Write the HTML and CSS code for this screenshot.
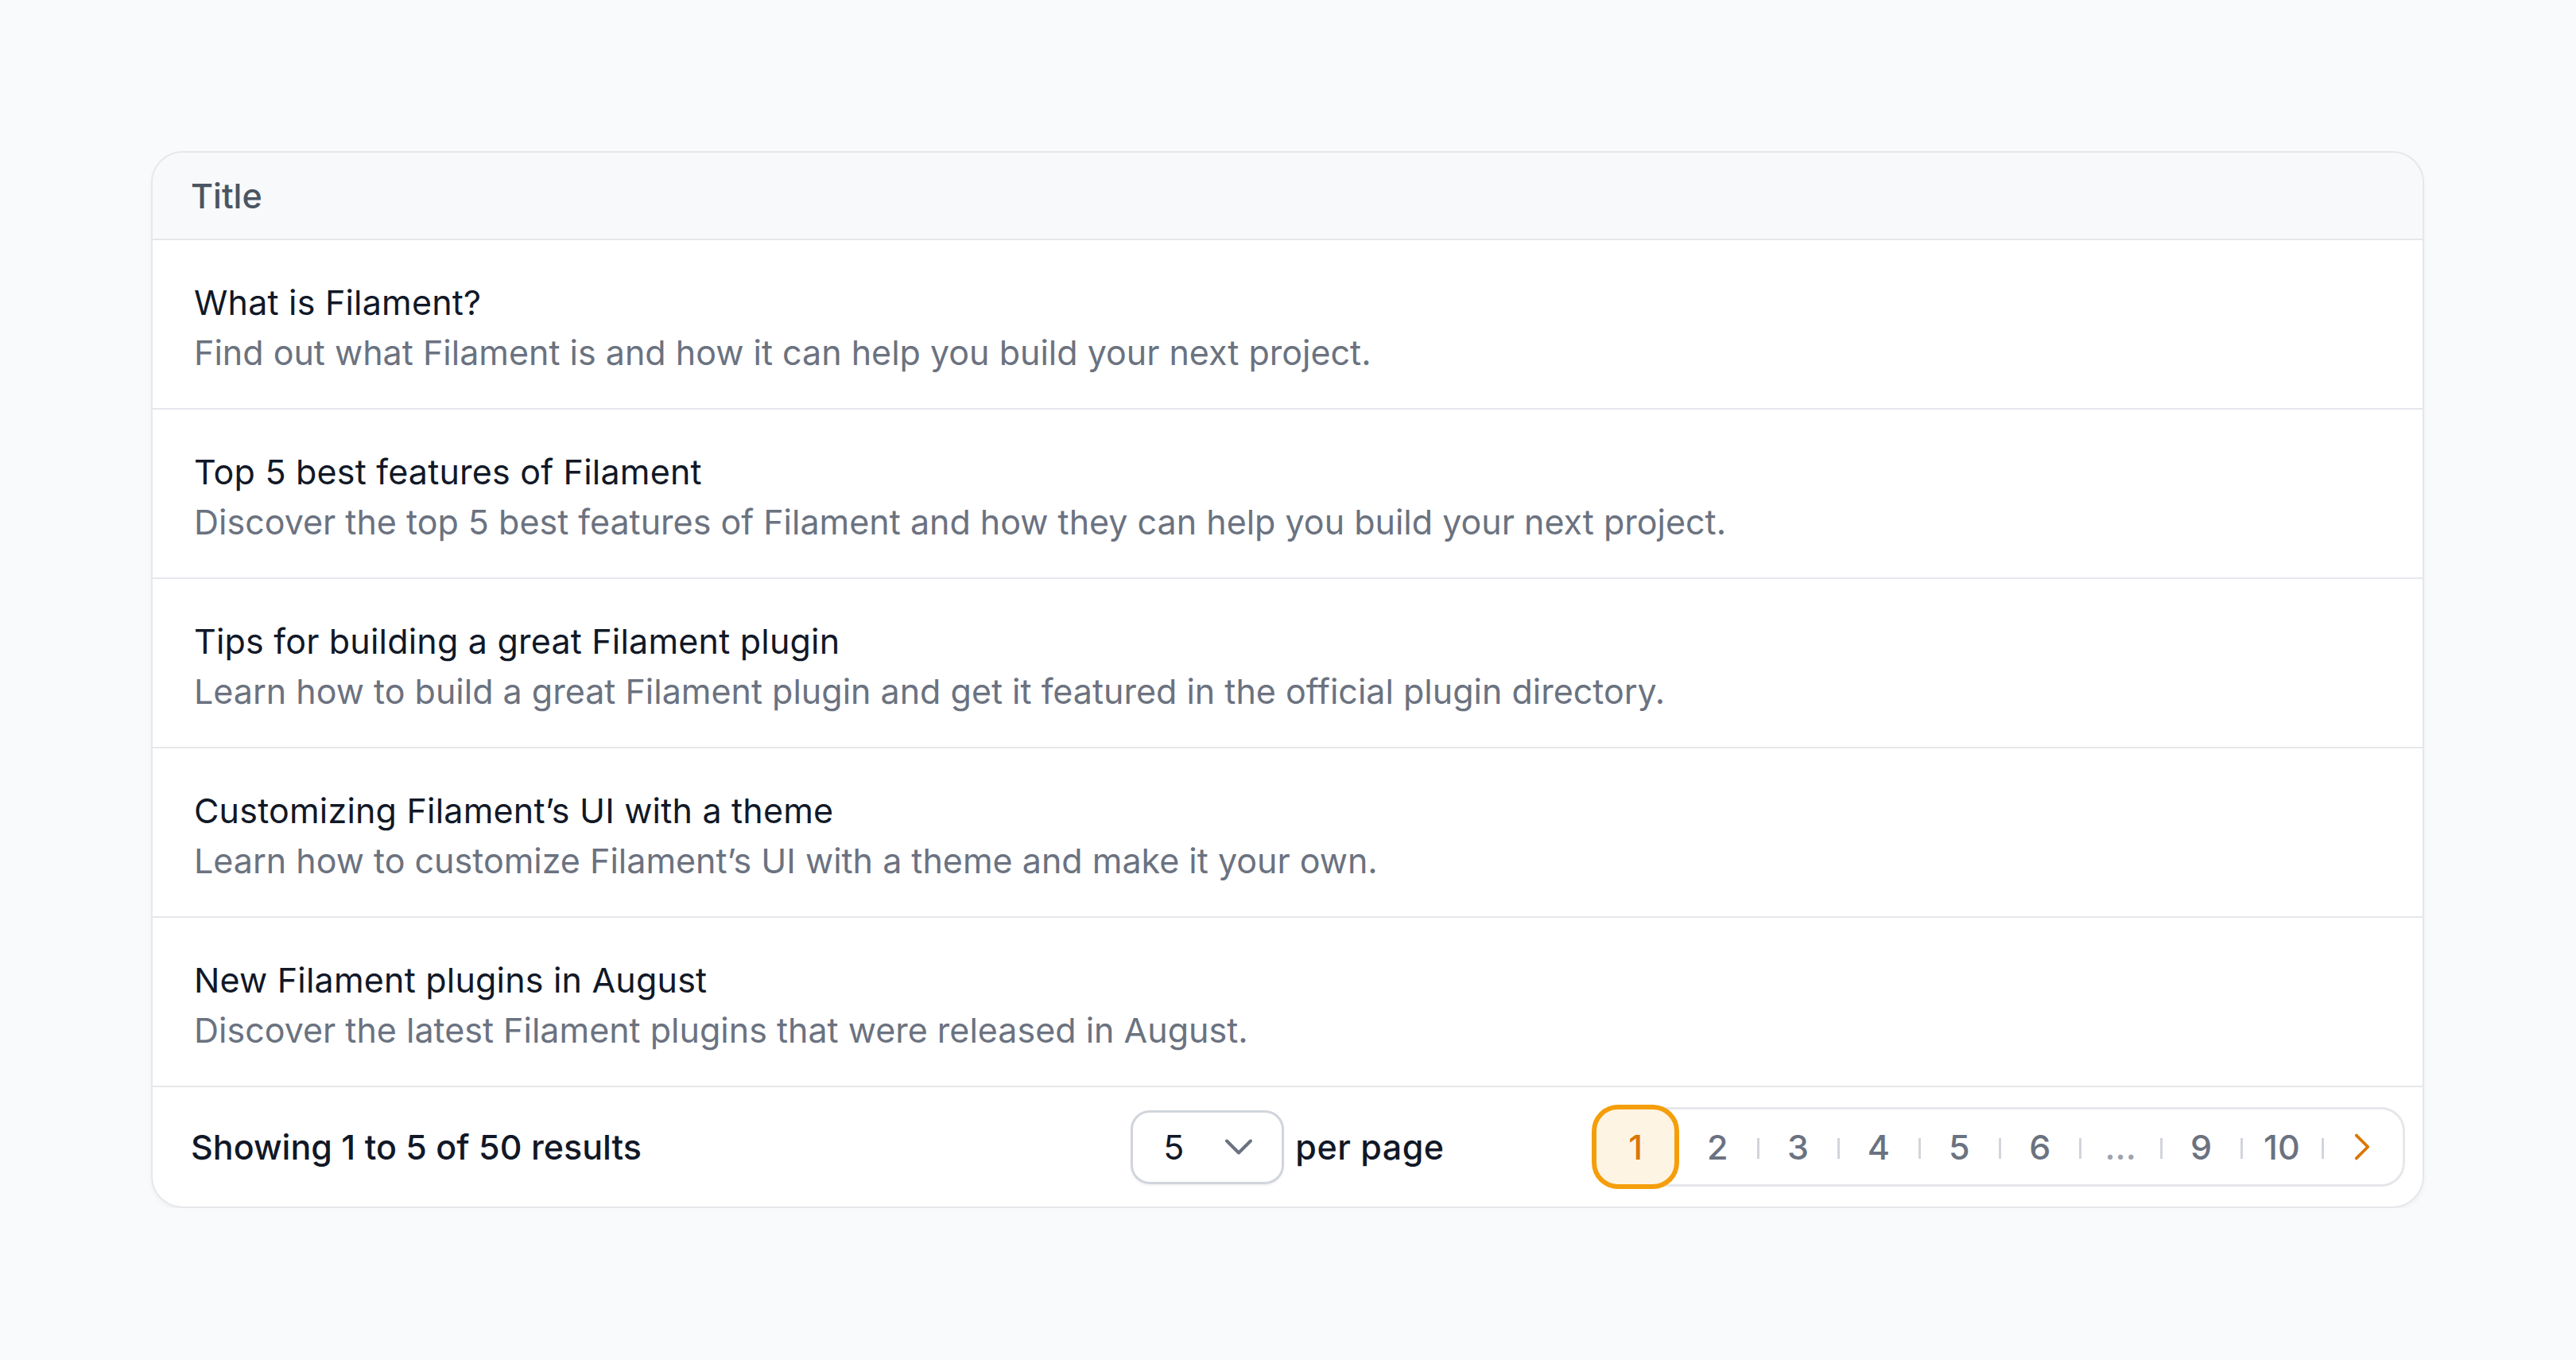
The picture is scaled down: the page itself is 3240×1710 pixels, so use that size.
FILE: index.html
```html
<!DOCTYPE html>
<html lang="en">
<head>
<meta charset="utf-8">
<title>Posts table</title>
<link rel="stylesheet" href="styles.css">
</head>
<body>
<main class="page">
  <section class="card">
    <div class="thead">Title</div>
    <div class="row">
      <div class="row-title">What is Filament?</div>
      <div class="row-desc">Find out what Filament is and how it can help you build your next project.</div>
    </div>
    <div class="row">
      <div class="row-title">Top 5 best features of Filament</div>
      <div class="row-desc">Discover the top 5 best features of Filament and how they can help you build your next project.</div>
    </div>
    <div class="row">
      <div class="row-title">Tips for building a great Filament plugin</div>
      <div class="row-desc">Learn how to build a great Filament plugin and get it featured in the official plugin directory.</div>
    </div>
    <div class="row">
      <div class="row-title">Customizing Filament’s UI with a theme</div>
      <div class="row-desc">Learn how to customize Filament’s UI with a theme and make it your own.</div>
    </div>
    <div class="row">
      <div class="row-title">New Filament plugins in August</div>
      <div class="row-desc">Discover the latest Filament plugins that were released in August.</div>
    </div>
    <footer class="tfoot">
      <div class="overview">Showing 1 to 5 of 50 results</div>
      <div class="per-page">
        <div class="select">
          <span class="select-value">5</span>
          <svg class="select-chevron" viewBox="0 0 24 24" fill="none" stroke="currentColor" stroke-width="2" stroke-linecap="round" stroke-linejoin="round"><path d="M19.5 8.25l-7.5 7.5-7.5-7.5"/></svg>
        </div>
        <span class="per-page-label">per page</span>
      </div>
      <nav class="pager">
        <span class="item active">1</span>
        <span class="item sep">2</span>
        <span class="item sep">3</span>
        <span class="item sep">4</span>
        <span class="item sep">5</span>
        <span class="item sep">6</span>
        <span class="item sep dots">...</span>
        <span class="item sep">9</span>
        <span class="item sep">10</span>
        <span class="item sep next">
          <svg class="next-icon" viewBox="0 0 24 24" fill="none" stroke="currentColor" stroke-width="2" stroke-linecap="round" stroke-linejoin="round"><path d="M8.25 4.5l7.5 7.5-7.5 7.5"/></svg>
        </span>
      </nav>
    </footer>
  </section>
</main>
</body>
</html>
```

FILE: styles.css
```css
* { box-sizing: border-box; }

html, body {
  margin: 0;
  padding: 0;
  background: #f9fafb;
}

body {
  font-family: Inter, "Noto Sans", "Liberation Sans", sans-serif;
  font-size: 43px;
  color: #111827;
}

.page {
  padding: 190px 191px 0 190px;
}

.card {
  background: #ffffff;
  border: 2px solid #e6e7ea;
  border-radius: 40px;
  overflow: hidden;
  box-shadow: 0 3px 6px rgba(17, 24, 39, 0.04);
}

.thead {
  height: 110px;
  display: flex;
  align-items: center;
  padding-left: 48px;
  background: #f8f9fa;
  border-bottom: 2px solid #e5e7eb;
  color: #4b5563;
  font-weight: 500;
  font-size: 43px;
}

.row {
  padding: 47px 52px 38px 52px;
  border-bottom: 2px solid #e5e7eb;
  line-height: 63px;
}

.row-title {
  color: #111827;
  letter-spacing: 0.2px;
}

.row-desc {
  color: #6b7280;
}

.tfoot {
  height: 150px;
  display: grid;
  grid-template-columns: 1fr auto 1fr;
  align-items: center;
  padding: 0 22px;
}

.overview {
  font-weight: 500;
  color: #111827;
  justify-self: start;
  padding-left: 26px;
}

.per-page {
  display: flex;
  align-items: center;
  gap: 14px;
}

.select {
  width: 193px;
  height: 93px;
  border: 3px solid #d1d5db;
  border-radius: 24px;
  display: flex;
  align-items: center;
  justify-content: space-between;
  padding: 0 30px 0 38px;
  box-shadow: 0 2px 3px rgba(17, 24, 39, 0.05);
}

.select-value {
  color: #111827;
}

.select-chevron {
  width: 48px;
  height: 48px;
  color: #6b7280;
}

.per-page-label {
  font-weight: 500;
  color: #111827;
  letter-spacing: 0.5px;
}

.pager {
  justify-self: end;
  display: flex;
  align-items: stretch;
  height: 100px;
  border: 3px solid #e5e7eb;
  border-radius: 30px;
  background: #ffffff;
}

.item {
  position: relative;
  width: 101.4px;
  display: flex;
  align-items: center;
  justify-content: center;
  color: #6b7280;
  font-weight: 500;
}

.item.sep::before {
  content: "";
  position: absolute;
  left: -1px;
  top: 36px;
  width: 3px;
  height: 26px;
  background: #d1d5db;
}

.item.active {
  z-index: 1;
  margin: -3px 0 -3px -3px;
  width: 104.4px;
  border: 3px solid #f59e0b;
  box-shadow: 0 0 0 3px #f59e0b;
  border-radius: 30px;
  background: #fef4e4;
  color: #d97706;
}

.item.dots {
  color: #9ca3af;
}

.next {
  color: #d97706;
}

.next-icon {
  width: 46px;
  height: 46px;
}
```
